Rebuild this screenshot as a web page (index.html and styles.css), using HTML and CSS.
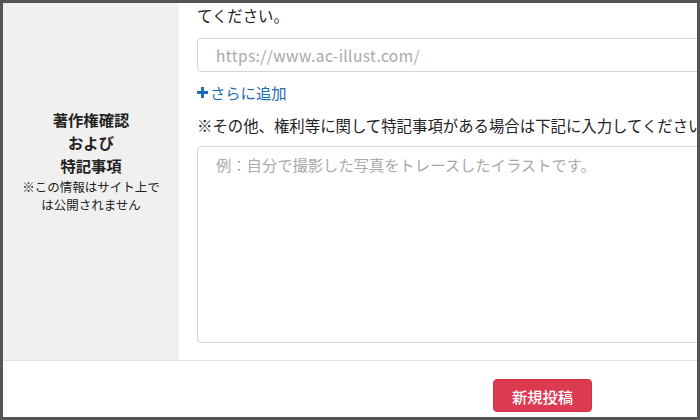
FILE: index.html
```html
<!DOCTYPE html>
<html lang="ja">
<head>
<meta charset="utf-8">
<link rel="stylesheet" href="styles.css">
</head>
<body>
<div class="frame">
  <div class="row">
    <div class="label">
      <div class="label-title">著作権確認<br>および<br>特記事項</div>
      <div class="label-note">※この情報はサイト上で<br>は公開されません</div>
    </div>
    <div class="field">
      <p class="text first">てください。</p>
      <input class="input" type="text" placeholder="https://www.ac-illust.com/">
      <a class="add" href="#"><svg class="plus" viewBox="0 0 12 12" width="11" height="11"><path d="M4.4 0h3.2v4.4H12v3.2H7.6V12H4.4V7.6H0V4.4h4.4z" fill="currentColor"/></svg>さらに追加</a>
      <p class="text note">※その他、権利等に関して特記事項がある場合は下記に入力してください。</p>
      <textarea class="area" placeholder="例：自分で撮影した写真をトレースしたイラストです。"></textarea>
    </div>
  </div>
  <div class="footer">
    <button class="submit" type="button">新規投稿</button>
  </div>
</div>
</body>
</html>
```
FILE: styles.css
```css
html, body {
  margin: 0;
  padding: 0;
  background: #555555;
}
body {
  font-family: "Noto Sans CJK JP", "Noto Sans", sans-serif;
  color: #222222;
}
.frame {
  margin: 3px;
  width: 694px;
  height: 414px;
  background: #ffffff;
  overflow: hidden;
}
.row {
  display: flex;
  border-bottom: 1px solid #dde2e6;
  height: 357px;
}
.label {
  width: 176px;
  flex: none;
  background: #f0f0f0;
  text-align: center;
  padding-top: 105px;
  box-sizing: border-box;
}
.label-title {
  font-size: 15.3px;
  font-weight: bold;
  line-height: 23px;
}
.label-note {
  font-size: 12.5px;
  line-height: 18px;
  margin-top: 1px;
}
.field {
  flex: 1;
  min-width: 0;
  padding-left: 18px;
  display: flex;
  flex-direction: column;
  align-items: flex-start;
}
.text {
  margin: 0;
  font-size: 15.4px;
  line-height: 24px;
  white-space: nowrap;
}
.input {
  margin-top: 11px;
  width: 540px;
  height: 34px;
  box-sizing: border-box;
  border: 1px solid #cfd6dd;
  border-radius: 4px;
  padding: 0 18px;
  font-family: "Noto Sans CJK JP", sans-serif;
  font-size: 15.5px;
  letter-spacing: 0.4px;
  color: #333;
  flex: none;
}
.input::placeholder, .area::placeholder {
  color: #a9a9a9;
}
.add {
  margin-top: 8px;
  display: flex;
  align-items: center;
  gap: 2px;
  font-size: 15.3px;
  line-height: 24px;
  color: #1c6cb8;
  text-decoration: none;
}
.plus {
  display: block;
}
.note {
  margin-top: 9px;
}
.area {
  margin-top: 9px;
  width: 540px;
  height: 197px;
  box-sizing: border-box;
  border: 1px solid #cfd6dd;
  border-radius: 4px;
  padding: 6px 18px;
  font-family: "Noto Sans CJK JP", sans-serif;
  font-size: 15.3px;
  line-height: 22px;
  resize: none;
  flex: none;
}
.footer {
  padding-top: 18px;
  padding-left: 490px;
}
.submit {
  width: 99px;
  height: 33px;
  border: 1px solid #d42f45;
  border-radius: 4px;
  background: #dc3a50;
  color: #ffffff;
  font-family: "Noto Sans CJK JP", sans-serif;
  font-size: 15.3px;
  font-weight: 500;
  padding: 0;
}
```
